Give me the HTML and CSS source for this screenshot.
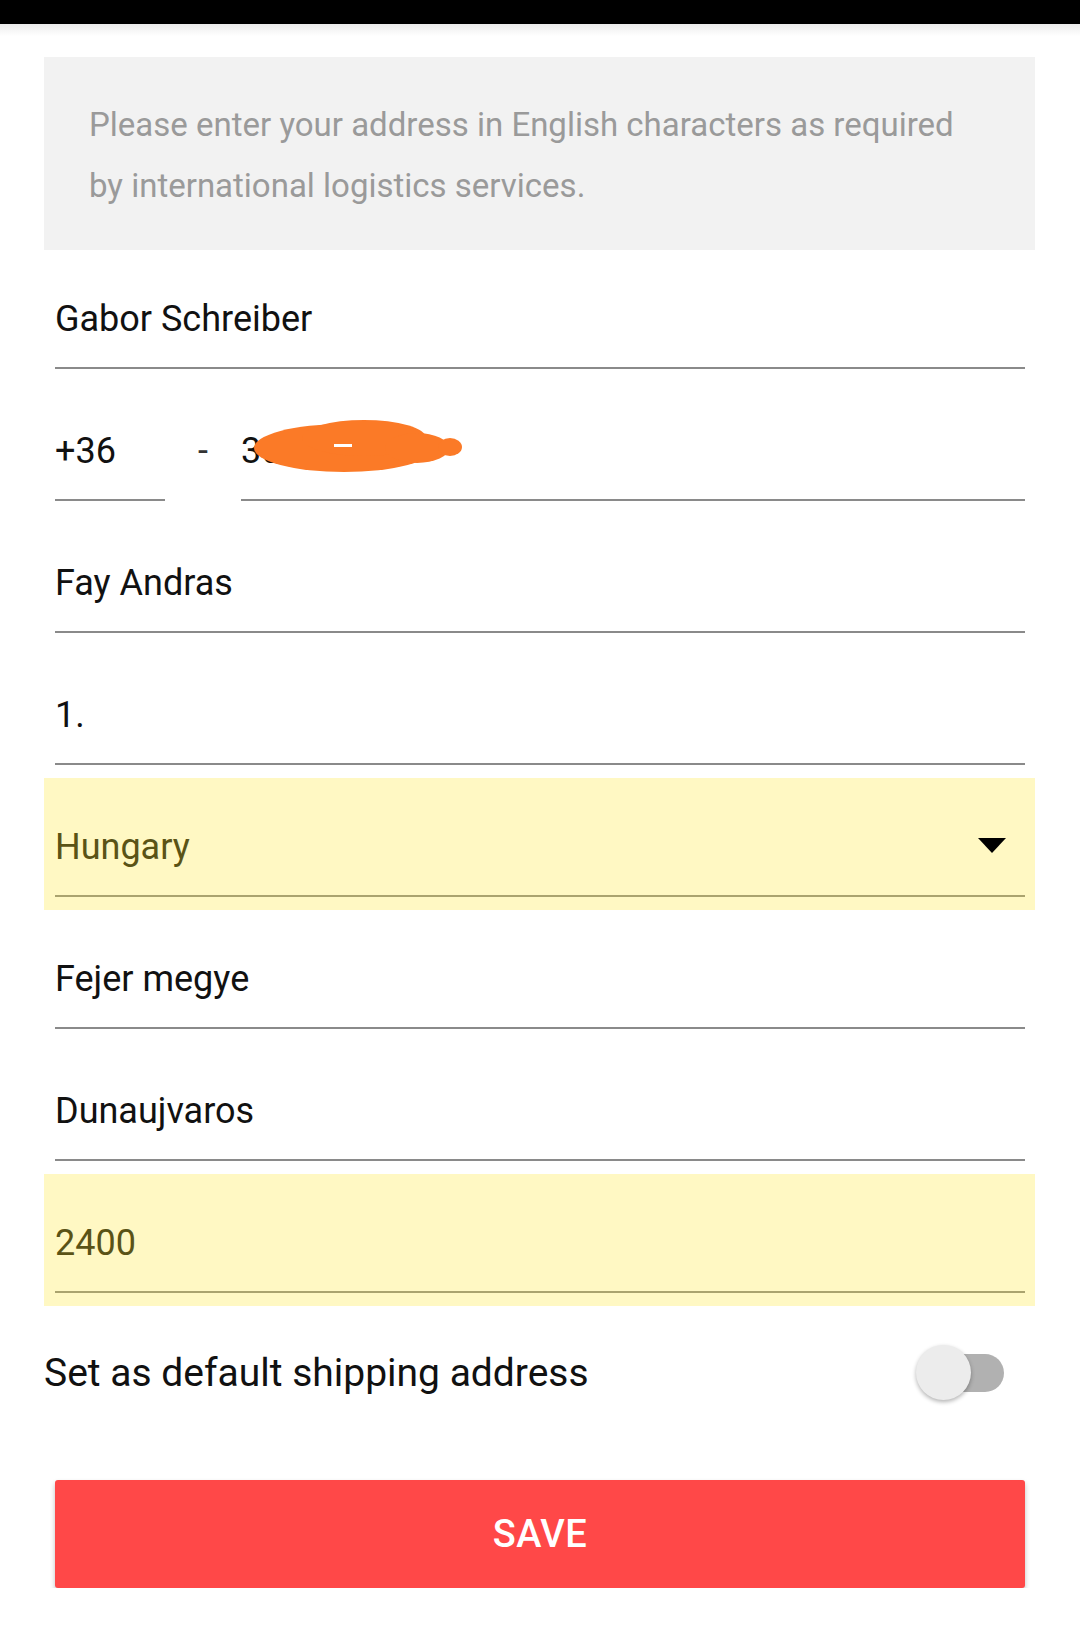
FILE: index.html
```html
<!DOCTYPE html>
<html lang="en">
<head>
<meta charset="utf-8">
<title>Address</title>
<link rel="stylesheet" href="styles.css">
</head>
<body>
<div class="statusbar"></div>
<div class="topshade"></div>
<main class="content">
  <div class="notice">
    <p>Please enter your address in English characters as required<br>by international logistics services.</p>
  </div>

  <div class="row"><div class="line">Gabor Schreiber</div></div>

  <div class="row phone">
    <div class="line code">+36</div>
    <div class="dash">-</div>
    <div class="line number">
      <span>30</span>
      <svg class="blob" width="214" height="58" viewBox="0 0 214 58">
        <ellipse cx="92" cy="30" rx="90" ry="24" fill="#fb7a27"/>
        <ellipse cx="112" cy="20" rx="62" ry="18" fill="#fb7a27"/>
        <ellipse cx="165" cy="30" rx="32" ry="15" fill="#fb7a27"/>
        <ellipse cx="198" cy="29" rx="12" ry="9" fill="#fb7a27"/>
        <rect x="82" y="26" width="18" height="3" fill="#ffffff"/>
      </svg>
    </div>
  </div>

  <div class="row"><div class="line">Fay Andras</div></div>
  <div class="row"><div class="line">1.</div></div>

  <div class="row hl">
    <div class="line select">
      <span>Hungary</span>
      <svg class="caret" width="28" height="15" viewBox="0 0 28 15"><path d="M0 0 L28 0 L14 15 Z" fill="#000"/></svg>
    </div>
  </div>

  <div class="row"><div class="line">Fejer megye</div></div>
  <div class="row"><div class="line">Dunaujvaros</div></div>
  <div class="row hl"><div class="line">2400</div></div>

  <div class="default-row">
    <span class="default-label">Set as default shipping address</span>
    <span class="switch"><span class="track"></span><span class="thumb"></span></span>
  </div>

  <div class="btn-wrap"><button class="save">SAVE</button></div>
</main>
</body>
</html>
```

FILE: styles.css
```css
* { box-sizing: border-box; }
html, body {
  margin: 0;
  padding: 0;
  background: #ffffff;
  font-family: Roboto, "Noto Sans", "Liberation Sans", sans-serif;
}
.statusbar {
  height: 24px;
  background: #000;
}
.topshade {
  height: 12px;
  background: linear-gradient(#ececec, #ffffff);
}
.content {
  padding: 21px 45px 0 44px;
}
.notice {
  height: 193px;
  background: #f2f2f2;
  padding: 2px 45px 0;
  display: flex;
  align-items: center;
}
.notice p {
  margin: 0;
  font-size: 33px;
  line-height: 61px;
  color: #9a9a9a;
}
.row {
  height: 132px;
  padding: 0 10px 13px 11px;
  display: flex;
}
.row.hl {
  background: #fff8c3;
}
.line {
  flex: 1;
  height: 119px;
  border-bottom: 2px solid #8a8a8a;
  padding-top: 47px;
  font-size: 36px;
  line-height: 44px;
  color: #111;
  white-space: nowrap;
}
.row.hl .line {
  color: #5a5316;
  border-bottom-color: #aaa36e;
}
.phone .code {
  flex: 0 0 110px;
}
.phone .dash {
  width: 76px;
  padding: 47px 0 0 33px;
  font-size: 36px;
  line-height: 44px;
  color: #333;
}
.phone .number {
  position: relative;
}
.blob {
  position: absolute;
  left: 11px;
  top: 36px;
}
.select {
  display: flex;
  align-items: flex-start;
  justify-content: space-between;
}
.caret {
  margin: 13px 19px 0 0;
}
.default-row {
  height: 134px;
  display: flex;
  align-items: center;
  justify-content: space-between;
}
.default-label {
  font-size: 39px;
  color: #111;
}
.switch {
  position: relative;
  width: 88px;
  height: 58px;
  margin-right: 31px;
}
.track {
  position: absolute;
  left: 24px;
  top: 10px;
  width: 64px;
  height: 38px;
  border-radius: 19px;
  background: #b1b1b1;
}
.thumb {
  position: absolute;
  left: 0;
  top: 1px;
  width: 55px;
  height: 55px;
  border-radius: 50%;
  background: #ececec;
  box-shadow: 0 2px 4px rgba(0,0,0,0.3);
}
.btn-wrap {
  padding: 40px 10px 0 11px;
}
.save {
  display: block;
  width: 100%;
  height: 108px;
  border: none;
  border-radius: 3px;
  background: #ff4848;
  color: #fff;
  font-family: Roboto, "Noto Sans", "Liberation Sans", sans-serif;
  font-weight: 500;
  font-size: 38px;
  letter-spacing: 0.5px;
  box-shadow: 0 3px 5px rgba(0,0,0,0.25);
}
```
